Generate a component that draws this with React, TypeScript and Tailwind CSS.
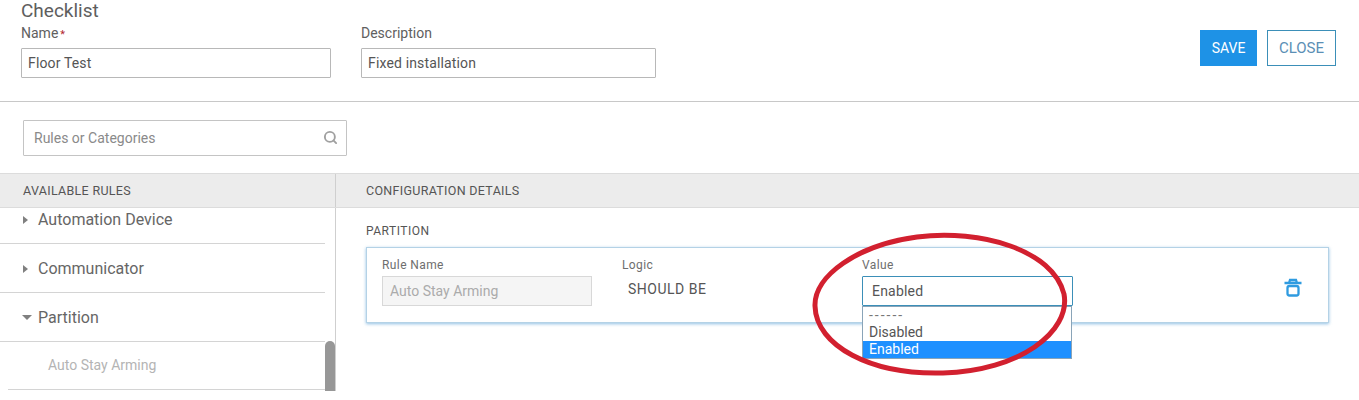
import { Search } from 'lucide-react';

const font = { fontFamily: 'Roboto, "Noto Sans", sans-serif' };

function CategoryRow({ label, open, top }: { label: string; open?: boolean; top?: boolean }) {
  return (
    <div className={`flex items-center border-b border-[#d4d4d4] pl-[23px] text-[16px] text-[#666666] ${top ? 'h-[36px] pb-[11px]' : 'h-[49px] pt-[1px]'}`}>
      <span
        className={
          open
            ? 'mr-[6px] ml-[-1px] h-0 w-0 border-x-[5px] border-t-[5px] border-x-transparent border-t-[#808080]'
            : 'mr-[10px] h-0 w-0 border-y-[4px] border-l-[5px] border-y-transparent border-l-[#808080]'
        }
      />
      {label}
    </div>
  );
}

export default function App() {
  return (
    <div className="relative h-[400px] w-[1359px] overflow-hidden bg-white text-[#606060]" style={font}>
      <header className="flex h-[102px] items-start justify-between border-b border-[#c8c8c8] pl-[21px] pr-[23px]">
        <div>
          <h1 className="h-[24px] text-[19px] leading-[22px] text-[#5e5e5e]">Checklist</h1>
          <div className="flex gap-[30px]">
            <div className="w-[310px]">
              <label className="block h-[24px] text-[14px] leading-[18px]">
                Name<span className="ml-[2px] text-[11px] text-[#b3262e]">*</span>
              </label>
              <div className="flex h-[30px] items-center rounded-[1px] border border-[#b8b8b8] px-[6px] pt-[1px] text-[14px] tracking-[0.15px] text-[#555555]">Floor Test</div>
            </div>
            <div className="w-[295px]">
              <label className="block h-[24px] text-[14px] leading-[18px]">Description</label>
              <div className="flex h-[30px] items-center rounded-[1px] border border-[#b8b8b8] px-[6px] pt-[1px] text-[14px] tracking-[0.15px] text-[#555555]">Fixed installation</div>
            </div>
          </div>
        </div>
        <div className="mt-[30px] flex gap-[10px]">
          <button className="h-[36px] w-[57px] bg-[#1e92e6] text-[14px] text-white">SAVE</button>
          <button className="h-[36px] w-[69px] border border-[#3b8fb8] text-[15px] text-[#5b8fb5]">CLOSE</button>
        </div>
      </header>

      <div className="pl-[23px] pt-[18px]">
        <div className="flex h-[36px] w-[324px] items-center justify-between rounded-[1px] border border-[#c4c4c4] pl-[10px] pr-[8px] text-[14px] text-[#8a8a8a]">
          <span className="pt-[1px]">Rules or Categories</span>
          <Search size={15} strokeWidth={3} className="mb-[2px] text-[#a0a0a0]" />
        </div>
      </div>

      <div className="mt-[17px] flex h-[35px] border-y border-[#dcdcdc] bg-[#ececec] text-[12.5px] tracking-[0.3px] text-[#555555]">
        <div className="flex w-[336px] items-center border-r border-[#cfcfcf] pl-[23px] pt-[2px]">AVAILABLE RULES</div>
        <div className="flex items-center pl-[30px] pt-[2px]">CONFIGURATION DETAILS</div>
      </div>

      <div className="flex">
        <aside className="relative h-[183px] w-[336px] border-r border-[#cfcfcf]">
          <div className="w-[325px]">
            <CategoryRow label="Automation Device" top />
            <CategoryRow label="Communicator" />
            <CategoryRow label="Partition" open />
            <div className="ml-[8px] flex h-[48px] items-center border-b border-[#d4d4d4] pl-[40px] text-[14px] text-[#b4b4b4]">Auto Stay Arming</div>
          </div>
          <div className="absolute left-[325px] top-[133px] h-[50px] w-[10px] rounded-t-[5px] bg-[#979797]" />
        </aside>

        <main className="w-[963px] pl-[30px]">
          <h2 className="flex h-[39px] items-center pt-[7px] text-[12px] tracking-[0.5px] text-[#555555]">PARTITION</h2>
          <div className="relative flex h-[76px] w-[963px] border border-[#b4d2e6] pl-[15px] pt-[10px] shadow-[0_1px_3px_rgba(70,150,210,0.6)]">
            <div className="w-[240px]">
              <div className="h-[18px] text-[12px] leading-[14px] tracking-[0.4px] text-[#6e6e6e]">Rule Name</div>
              <div className="flex h-[30px] w-[210px] items-center border border-[#d8d8d8] bg-[#f5f5f5] px-[7px] pt-[1px] text-[14px] text-[#ababab]">Auto Stay Arming</div>
            </div>
            <div className="w-[240px]">
              <div className="h-[18px] text-[12px] leading-[14px] tracking-[0.4px] text-[#6e6e6e]">Logic</div>
              <div className="flex h-[30px] items-center pb-[4px] pl-[6px] text-[14px] tracking-[0.5px] text-[#555555]">SHOULD BE</div>
            </div>
            <div className="relative w-[211px]">
              <div className="h-[18px] text-[12px] leading-[14px] tracking-[0.4px] text-[#6e6e6e]">Value</div>
              <div className="flex h-[30px] items-center rounded-[1px] border border-[#3b8fb8] pl-[9px] text-[14px] tracking-[0.2px] text-[#555555]">Enabled</div>
              <ul className="absolute left-0 top-[48px] h-[53px] w-[210px] border border-[#8aa4b8] bg-white text-[14px] leading-[17px] text-[#555555]">
                <li className="pl-[6px] tracking-[2px] text-[#777777]">------</li>
                <li className="pl-[6px]">Disabled</li>
                <li className="bg-[#1e90ff] pl-[6px] text-white">Enabled</li>
              </ul>
            </div>
            <svg className="absolute left-[916px] top-[30px]" width="20" height="20" viewBox="0 0 20 20" fill="none" stroke="#2f9be0" strokeWidth="2.3">
              <path d="M1.5 5h17M6 5l1-3h6l1 3" />
              <rect x="4.5" y="8" width="11" height="9.5" rx="2" />
            </svg>
          </div>
        </main>
      </div>

      <svg className="pointer-events-none absolute left-[805px] top-[228px]" width="270" height="154" viewBox="0 0 270 154" fill="none">
        <path
          d="M10 78C9 48 52 17 112 9C176 1 248 22 259 66C266 104 214 143 138 145C66 147 11 118 10 78Z"
          stroke="#d2202f"
          strokeWidth="5"
        />
      </svg>
    </div>
  );
}
